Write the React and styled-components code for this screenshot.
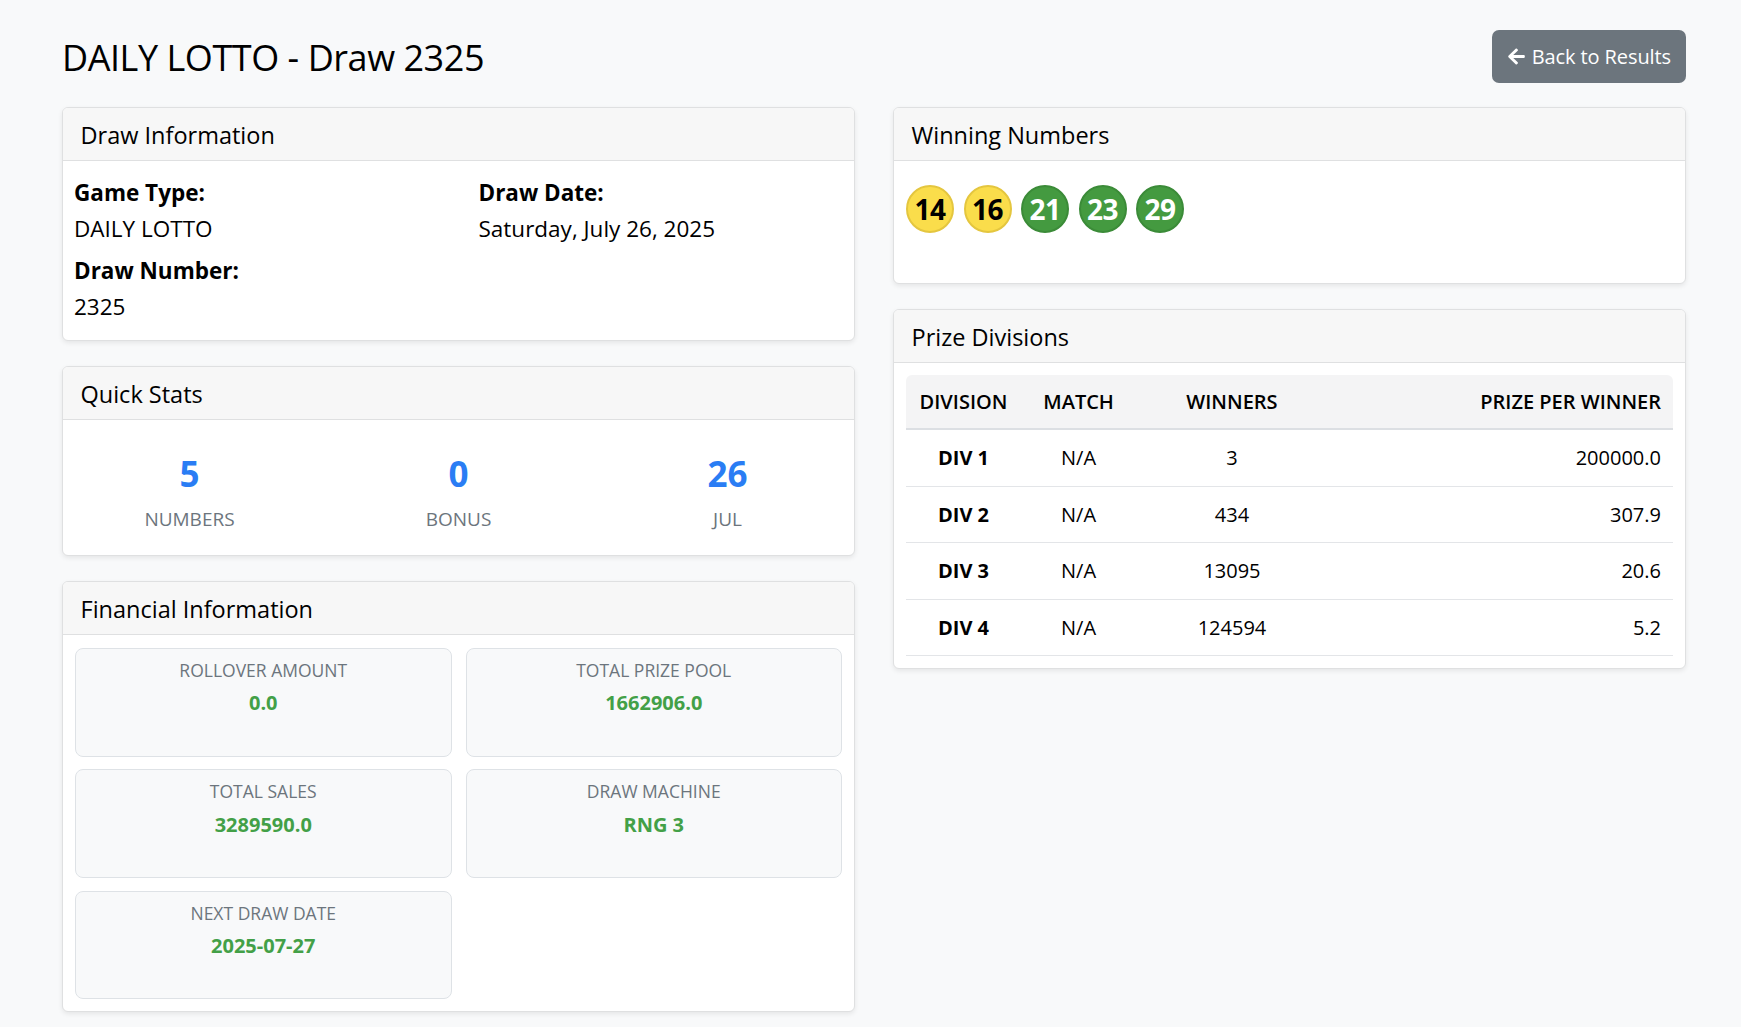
import React from "react";
import styled, { createGlobalStyle } from "styled-components";
import { FaArrowLeft } from "react-icons/fa";

const GlobalStyle = createGlobalStyle`
  html, body { margin: 0; padding: 0; }
  body {
    background: #f8f9fa;
    color: #212529;
    font-family: "Open Sans", "Noto Sans", "Liberation Sans", sans-serif;
    font-size: 22.5px;
    line-height: 1.5;
  }
  * { box-sizing: border-box; }
`;

const Page = styled.div`
  padding: 30px 55px 40px 62px;
`;

const TopBar = styled.div`
  display: flex;
  justify-content: space-between;
  align-items: center;
  margin-bottom: 24px;
`;

const Title = styled.h1`
  margin: 0;
  padding-top: 3px;
  font-size: 36px;
  font-weight: 500;
  line-height: 1.2;
  letter-spacing: -0.45px;
  color: #000;
`;

const BackButton = styled.button`
  display: inline-flex;
  align-items: center;
  gap: 6px;
  height: 53px;
  padding: 0 15px;
  border: none;
  border-radius: 7px;
  background: #6c757d;
  color: #fff;
  font-family: inherit;
  font-size: 20px;
  line-height: 1.5;
  letter-spacing: -0.1px;
  cursor: pointer;
  svg { width: 19px; height: 19px; }
`;

const Columns = styled.div`
  display: grid;
  grid-template-columns: 1fr 1fr;
  column-gap: 38px;
  align-items: start;
`;

const Column = styled.div`
  display: flex;
  flex-direction: column;
  gap: 25px;
`;

const Card = styled.section`
  background: #fff;
  border: 1px solid #dfe0e1;
  border-radius: 6px;
  box-shadow: 0 2px 5px rgba(0, 0, 0, 0.08);
  overflow: hidden;
`;

const CardHeader = styled.h5`
  margin: 0;
  height: 53px;
  padding: 13px 17.5px 10px;
  background: #f7f7f7;
  border-bottom: 1px solid #dfe0e1;
  font-size: 23.5px;
  font-weight: 500;
  line-height: 28.8px;
  color: #000;
`;

const CardBody = styled.div`
  padding: ${(p) => p.$pad || "12px"};
`;

const InfoGrid = styled.div`
  display: grid;
  grid-template-columns: 1fr 1fr;
  column-gap: 40px;
`;

const Field = styled.div`
  margin-bottom: 14px;
`;

const FieldLabel = styled.div`
  font-weight: 700;
  line-height: 28px;
  margin-bottom: 8px;
  color: #000;
`;

const FieldValue = styled.div`
  line-height: 28px;
  color: #000;
`;

const BallRow = styled.div`
  display: flex;
  gap: 9.5px;
  padding: 12px 0 38px;
`;

const Ball = styled.div`
  width: 48px;
  height: 48px;
  border-radius: 50%;
  display: flex;
  align-items: center;
  justify-content: center;
  font-size: 28px;
  font-weight: 700;
  line-height: 1;
  letter-spacing: -0.5px;
  background: ${(p) => (p.$tone === "yellow" ? "#fadd4b" : "#449a40")};
  border: 2px solid ${(p) => (p.$tone === "yellow" ? "#e4c63f" : "#3b8b38")};
  color: ${(p) => (p.$tone === "yellow" ? "#000" : "#fff")};
`;

const StatsGrid = styled.div`
  display: grid;
  grid-template-columns: repeat(3, 1fr);
  margin: 0 -20px;
  padding: 21px 0 9px;
  text-align: center;
`;

const StatNumber = styled.div`
  font-size: 35px;
  font-weight: 700;
  line-height: 42px;
  color: #2a7df4;
  margin-bottom: 9px;
`;

const StatLabel = styled.div`
  font-size: 19px;
  line-height: 30px;
  color: #6c757d;
  text-transform: uppercase;
`;

const TileGrid = styled.div`
  display: grid;
  grid-template-columns: 1fr 1fr;
  column-gap: 14px;
  row-gap: 12.5px;
`;

const Tile = styled.div`
  background: #f8f9fa;
  border: 1px solid #dee2e6;
  border-radius: 8px;
  padding: 8px 12px 20.5px;
  text-align: center;
`;

const TileLabel = styled.div`
  font-size: 17.5px;
  line-height: 26.25px;
  color: #6c757d;
  text-transform: uppercase;
  margin-bottom: 5px;
`;

const TileValue = styled.div`
  font-size: 20px;
  font-weight: 700;
  line-height: 30px;
  color: #43a047;
  margin-bottom: 17px;
`;

const TableWrap = styled.div`
  border-radius: 6px 6px 0 0;
  overflow: hidden;
`;

const Table = styled.table`
  width: 100%;
  border-collapse: collapse;
  font-size: 20px;
  color: #000;
`;

const Th = styled.th`
  background: #f4f4f5;
  padding: 11.5px 12px 11.5px;
  line-height: 30px;
  font-weight: 600;
  text-align: ${(p) => p.$align || "center"};
  border-bottom: 2px solid #dcdfe3;
  width: ${(p) => p.$w || "auto"};
`;

const Td = styled.td`
  padding: 13px 12px 12.6px;
  line-height: 30px;
  font-weight: ${(p) => (p.$bold ? 700 : 400)};
  text-align: ${(p) => p.$align || "center"};
  border-bottom: 1px solid #e3e5e8;
`;

const balls = [
  { n: 14, tone: "yellow" },
  { n: 16, tone: "yellow" },
  { n: 21, tone: "green" },
  { n: 23, tone: "green" },
  { n: 29, tone: "green" },
];

const stats = [
  { v: "5", l: "Numbers" },
  { v: "0", l: "Bonus" },
  { v: "26", l: "Jul" },
];

const tiles = [
  { l: "Rollover Amount", v: "0.0" },
  { l: "Total Prize Pool", v: "1662906.0" },
  { l: "Total Sales", v: "3289590.0" },
  { l: "Draw Machine", v: "RNG 3" },
  { l: "Next Draw Date", v: "2025-07-27" },
];

const divisions = [
  { d: "DIV 1", m: "N/A", w: "3", p: "200000.0" },
  { d: "DIV 2", m: "N/A", w: "434", p: "307.9" },
  { d: "DIV 3", m: "N/A", w: "13095", p: "20.6" },
  { d: "DIV 4", m: "N/A", w: "124594", p: "5.2" },
];

export default function App() {
  return (
    <>
      <GlobalStyle />
      <Page>
        <TopBar>
          <Title>DAILY LOTTO - Draw 2325</Title>
          <BackButton>
            <FaArrowLeft />
            Back to Results
          </BackButton>
        </TopBar>
        <Columns>
          <Column>
            <Card>
              <CardHeader>Draw Information</CardHeader>
              <CardBody $pad="18px 11px 5px">
                <InfoGrid>
                  <div>
                    <Field>
                      <FieldLabel>Game Type:</FieldLabel>
                      <FieldValue>DAILY LOTTO</FieldValue>
                    </Field>
                    <Field>
                      <FieldLabel>Draw Number:</FieldLabel>
                      <FieldValue>2325</FieldValue>
                    </Field>
                  </div>
                  <div>
                    <Field>
                      <FieldLabel>Draw Date:</FieldLabel>
                      <FieldValue>Saturday, July 26, 2025</FieldValue>
                    </Field>
                  </div>
                </InfoGrid>
              </CardBody>
            </Card>
            <Card>
              <CardHeader>Quick Stats</CardHeader>
              <CardBody>
                <StatsGrid>
                  {stats.map((s) => (
                    <div key={s.l}>
                      <StatNumber>{s.v}</StatNumber>
                      <StatLabel>{s.l}</StatLabel>
                    </div>
                  ))}
                </StatsGrid>
              </CardBody>
            </Card>
            <Card>
              <CardHeader>Financial Information</CardHeader>
              <CardBody $pad="13px 12px 12px">
                <TileGrid>
                  {tiles.map((t) => (
                    <Tile key={t.l}>
                      <TileLabel>{t.l}</TileLabel>
                      <TileValue>{t.v}</TileValue>
                    </Tile>
                  ))}
                </TileGrid>
              </CardBody>
            </Card>
          </Column>
          <Column>
            <Card>
              <CardHeader>Winning Numbers</CardHeader>
              <CardBody>
                <BallRow>
                  {balls.map((b) => (
                    <Ball key={b.n} $tone={b.tone}>
                      {b.n}
                    </Ball>
                  ))}
                </BallRow>
              </CardBody>
            </Card>
            <Card>
              <CardHeader>Prize Divisions</CardHeader>
              <CardBody>
                <TableWrap>
                  <Table>
                    <thead>
                      <tr>
                        <Th $w="15%">DIVISION</Th>
                        <Th $w="15%">MATCH</Th>
                        <Th $w="25%">WINNERS</Th>
                        <Th $align="right">PRIZE PER WINNER</Th>
                      </tr>
                    </thead>
                    <tbody>
                      {divisions.map((r) => (
                        <tr key={r.d}>
                          <Td $bold>{r.d}</Td>
                          <Td>{r.m}</Td>
                          <Td>{r.w}</Td>
                          <Td $align="right">{r.p}</Td>
                        </tr>
                      ))}
                    </tbody>
                  </Table>
                </TableWrap>
              </CardBody>
            </Card>
          </Column>
        </Columns>
      </Page>
    </>
  );
}
